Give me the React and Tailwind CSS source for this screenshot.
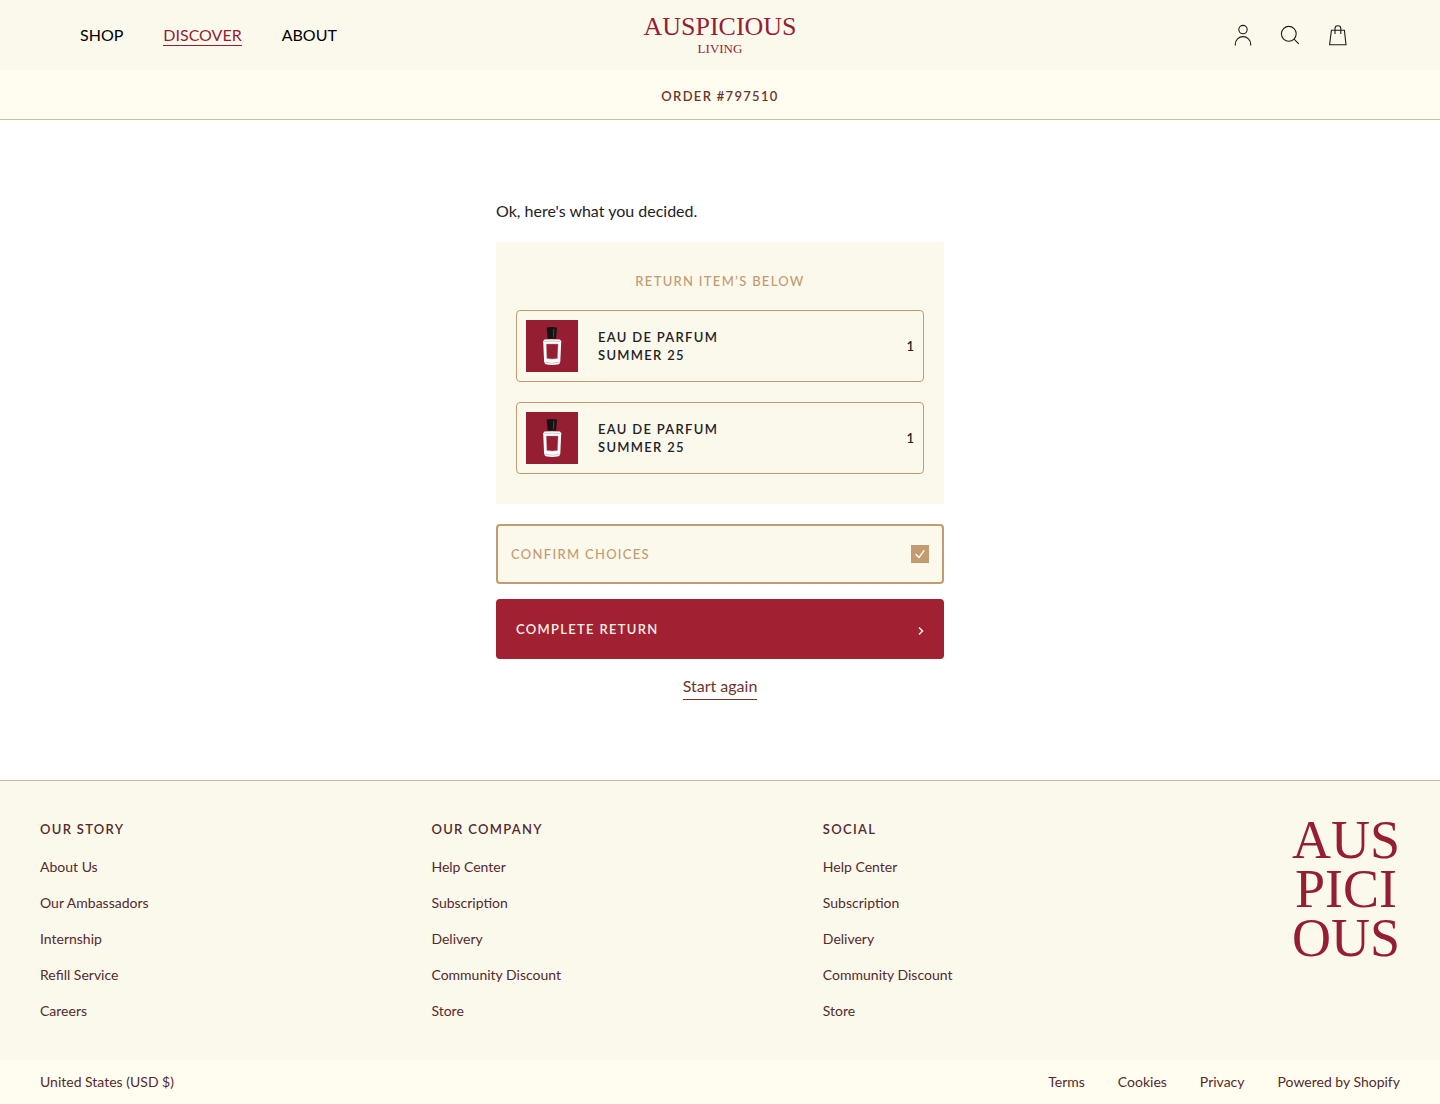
import React, { useState } from 'react';

const navLinks = [
    { label: 'SHOP' },
    { label: 'DISCOVER', active: true },
    { label: 'ABOUT' },
];

const items = [
    { id: 1, name: 'EAU DE PARFUM', variant: 'SUMMER 25', qty: 1 },
    { id: 2, name: 'EAU DE PARFUM', variant: 'SUMMER 25', qty: 1 },
];

const footerColumns = [
    { title: 'OUR STORY', links: ['About Us', 'Our Ambassadors', 'Internship', 'Refill Service', 'Careers'] },
    { title: 'OUR COMPANY', links: ['Help Center', 'Subscription', 'Delivery', 'Community Discount', 'Store'] },
    { title: 'SOCIAL', links: ['Help Center', 'Subscription', 'Delivery', 'Community Discount', 'Store'] },
];

const legalLinks = ['Terms', 'Cookies', 'Privacy', 'Powered by Shopify'];

function IconButton({ label, children }) {
    return (
        <button type="button" aria-label={label} className="size-6 text-[#1c1c1a]">
            <svg viewBox="0 0 24 24" fill="none" stroke="currentColor" strokeWidth="1.1" className="size-6">
                {children}
            </svg>
        </button>
    );
}

function Header() {
    return (
        <header className="grid h-[70px] grid-cols-[1fr_auto_1fr] items-center bg-[#fbf8ec]">
            <nav className="flex gap-10 pl-20 text-base">
                {navLinks.map((link) => (
                    <a
                        key={link.label}
                        href="#"
                        className={link.active ? 'border-b border-[#961e32] leading-5 text-[#961e32]' : 'border-b border-transparent leading-5 text-black'}
                    >
                        {link.label}
                    </a>
                ))}
            </nav>

            <a href="#" className="flex flex-col items-center font-['Liberation_Serif',serif] text-[#961e32]">
                <span className="text-[26px] leading-7">AUSPICIOUS</span>
                <span className="text-[13px] leading-4">LIVING</span>
            </a>

            <div className="flex justify-end gap-6 pr-[90px]">
                <IconButton label="Account">
                    <circle cx="13" cy="6.6" r="4.2" />
                    <path d="M5.300 22.500v-1.200a7.700 7.700 0 0 1 15.400 0v1.200" />
                </IconButton>
                <IconButton label="Search">
                    <circle cx="10.800" cy="10.800" r="7.400" />
                    <path d="M16 16.200l4.800 4.600" />
                </IconButton>
                <IconButton label="Bag">
                    <path d="M5.400 7.200h13l1.600 14.500H3.600z" />
                    <path d="M9 11V5.600a2.800 2.800 0 0 1 5.800 0V11" />
                </IconButton>
            </div>
        </header>
    );
}

function Bottle() {
    return (
        <svg viewBox="0 0 52 52" className="size-[52px] shrink-0 bg-[#961e32]" role="img" aria-label="Perfume bottle">
            <path d="M20.6 7.4q5-1 10.4 0l-1 11.4h-8.2z" fill="#141314" />
            <path d="M27.8 9l-.4 8.5" stroke="#5a5556" strokeWidth="0.8" />
            <path d="M17.2 21.2l1.2-1.6q7.800-.8 15.600 0l1.200 1.600-.9 20.400q-.2 2.600-3 3-5 .7-10.200 0-2.800-.4-3-3z" fill="#fff" />
            <path d="M18.500 21.600q7.500-1 15.200 0M18.600 42q7.500 2.600 15 0" fill="none" stroke="#b9aeb2" strokeWidth="0.700" />
            <path d="M20.300 24h11.800l-.6 14.600q-5 .9-10.600 0z" fill="#961e32" stroke="#b58a92" strokeWidth="0.500" />
        </svg>
    );
}

function ReturnItem({ item }) {
    return (
        <li className="flex items-center gap-5 rounded border border-[#c39b70] p-[9px] text-[13px] leading-[18px] font-semibold text-[#222225]">
            <Bottle />
            <p className="flex-1 tracking-widest">
                {item.name}
                <br />
                {item.variant}
            </p>
            <span>{item.qty}</span>
        </li>
    );
}

function Footer() {
    return (
        <footer className="text-sm leading-[18px] text-[#542a2c]">
            <div className="grid grid-cols-[2fr_2fr_2fr_1fr] gap-5 border-t border-[#d3b5a0] bg-[#fbf8ec] px-10 pt-[35px] pb-10">
                {footerColumns.map((col) => (
                    <div key={col.title} className="pt-1">
                        <h2 className="mb-5 text-[13px] font-semibold tracking-widest">{col.title}</h2>
                        <ul className="flex flex-col gap-[18px]">
                            {col.links.map((link) => (
                                <li key={link}>
                                    <a href="#">{link}</a>
                                </li>
                            ))}
                        </ul>
                    </div>
                ))}
                <p className="justify-self-end text-center font-['Liberation_Serif',serif] text-[54px] leading-[49px] text-[#961e32]">
                    AUS
                    <br />
                    PICI
                    <br />
                    OUS
                </p>
            </div>
            <div className="flex h-11 items-center justify-between bg-[#fffdf0] px-10">
                <p>United States (USD $)</p>
                <nav className="flex gap-[33px]">
                    {legalLinks.map((link) => (
                        <a key={link} href="#">{link}</a>
                    ))}
                </nav>
            </div>
        </footer>
    );
}

export default function App() {
    const [confirmed, setConfirmed] = useState(true);

    return (
        <div className="bg-white font-['Lato',sans-serif]">
            <Header />
            <div className="flex h-[50px] items-center justify-center border-b border-[#cdbd99] bg-[#fffdf0] pt-0.5">
                <h1 className="text-[13px] leading-[18px] font-semibold tracking-widest text-[#6d3528]">ORDER #797510</h1>
            </div>

            <main className="mx-auto flex w-full max-w-md flex-col py-20">
                <p className="mb-5 text-base leading-[22px] text-[#222225]">Ok, here's what you decided.</p>

                <section className="mb-5 bg-[#fbf8ec] px-5 py-[30px]">
                    <h2 className="mb-5 text-center text-[13px] leading-[18px] font-medium tracking-widest text-[#c39b70]">
                        RETURN ITEM’S BELOW
                    </h2>
                    <ul className="flex flex-col gap-5">
                        {items.map((item) => (
                            <ReturnItem key={item.id} item={item} />
                        ))}
                    </ul>
                </section>

                <label className="mb-[15px] flex h-[60px] items-center justify-between rounded border-2 border-[#c39b70] bg-[#fbf8ec] px-[13px] text-[13px] leading-[18px] font-medium tracking-widest text-[#c39b70]">
                    CONFIRM CHOICES
                    <span className="grid size-[18px]">
                        <input
                            type="checkbox"
                            checked={confirmed}
                            onChange={(e) => setConfirmed(e.target.checked)}
                            className="peer col-start-1 row-start-1 size-[18px] appearance-none border border-[#c39b70] checked:bg-[#c39b70]"
                        />
                        <svg viewBox="0 0 18 18" fill="none" stroke="#fffdf0" strokeWidth="1.4" strokeLinecap="round" strokeLinejoin="round" className="pointer-events-none invisible col-start-1 row-start-1 size-[18px] peer-checked:visible">
                            <path d="M5 9.400l3 3.200 5-7" />
                        </svg>
                    </span>
                </label>

                <button
                    type="button"
                    disabled={!confirmed}
                    className="mb-4 flex h-[60px] items-center justify-between rounded bg-[#a12132] px-5 text-[13px] leading-[18px] font-semibold tracking-widest text-[#fbf0e6]"
                >
                    COMPLETE RETURN
                    <svg viewBox="0 0 6 10" fill="none" stroke="currentColor" strokeWidth="1.5" className="mt-1 h-2.5 w-1.5">
                        <path d="M1 1.500l3.500 3.500L1 8.500" />
                    </svg>
                </button>

                <a href="#" className="self-center border-b border-[#6d3528] pb-0.5 text-base leading-[22px] text-[#6d3528]">
                    Start again
                </a>
            </main>

            <Footer />
        </div>
    );
}
